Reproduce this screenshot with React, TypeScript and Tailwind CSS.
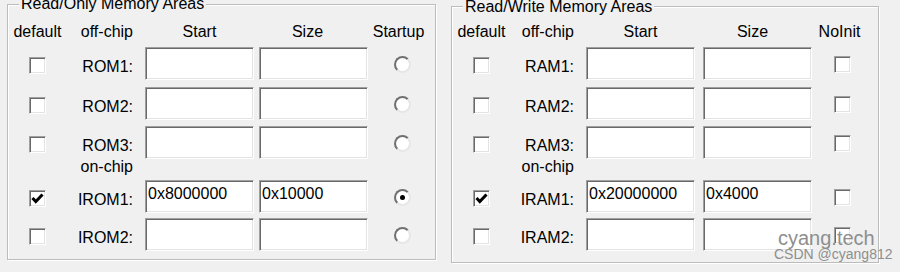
import React from 'react'

const sunken =
  'bg-white border border-t-[#a0a0a0] border-l-[#a0a0a0] border-r-white border-b-white shadow-[inset_1px_1px_0_#696969,inset_-1px_-1px_0_#e3e3e3]'

function Field({ value, className }: { value?: string; className: string }) {
  return (
    <div className={`h-[33px] w-[109px] shrink-0 pl-[2px] pt-[5px] leading-4 ${sunken} ${className}`}>
      {value}
    </div>
  )
}

function Check({ checked }: { checked?: boolean }) {
  return (
    <div className={`w-[17px] h-[17px] flex items-center justify-center ${sunken}`}>
      {checked && (
        <svg width="13" height="13" viewBox="0 0 13 13">
          <path d="M1.5 6 L4.8 9.5 L11.5 2.5" stroke="black" strokeWidth="3" fill="none" />
        </svg>
      )}
    </div>
  )
}

function Radio({ checked }: { checked?: boolean }) {
  return (
    <div className="w-[17px] h-[17px] rounded-full bg-white border-2 border-t-[#707070] border-l-[#707070] border-r-[#e6e6e6] border-b-[#e6e6e6] flex items-center justify-center">
      {checked && <div className="w-[5px] h-[5px] rounded-full bg-black" />}
    </div>
  )
}

interface Row {
  label: string
  checked?: boolean
  start?: string
  size?: string
  last?: boolean
}

interface Cols {
  col1: string
  col2: string
  startMl: string
  sizeMl: string
  col5: string
  sizeHead: string
  lastHead: string
  lastLabel: string
  radio: boolean
}

const romCols: Cols = {
  col1: 'w-[49px]',
  col2: 'w-[71px]',
  startMl: 'ml-[12px]',
  sizeMl: 'ml-[5px]',
  col5: 'w-[68px]',
  sizeHead: 'pr-[12px]',
  lastHead: 'pr-[7px]',
  lastLabel: 'Startup',
  radio: true,
}

const ramCols: Cols = {
  col1: 'w-[49px]',
  col2: 'w-[68px]',
  startMl: 'ml-[12px]',
  sizeMl: 'ml-[8px]',
  col5: 'w-[60px]',
  sizeHead: 'pr-[10px]',
  lastHead: 'pr-[5px]',
  lastLabel: 'NoInit',
  radio: false,
}

function AreaRow({ row, cols, className }: { row: Row; cols: Cols; className: string }) {
  return (
    <div className={`flex items-start h-[33px] pl-[5px] ${className}`}>
      <div className={`${cols.col1} shrink-0 flex justify-center pt-[10px]`}>
        <Check checked={row.checked} />
      </div>
      <div className={`${cols.col2} shrink-0 text-right pt-[12px] leading-4 whitespace-nowrap`}>{row.label}</div>
      <Field value={row.start} className={cols.startMl} />
      <Field value={row.size} className={cols.sizeMl} />
      <div className={`${cols.col5} shrink-0 flex justify-center pt-[9px]`}>
        {cols.radio ? <Radio checked={row.last} /> : <Check />}
      </div>
    </div>
  )
}

function Area({
  title,
  cols,
  off,
  on,
  boxClass,
  headClass,
  titleClass,
}: {
  title: string
  cols: Cols
  off: Row[]
  on: Row[]
  boxClass: string
  headClass: string
  titleClass: string
}) {
  return (
    <div className={`relative shrink-0 border border-[#bcbcbc] shadow-[inset_1px_1px_0_#fff,1px_1px_0_#fff] ${boxClass}`}>
      <span className={`absolute left-[11px] px-[2px] bg-[#f0f0f0] leading-4 whitespace-nowrap ${titleClass}`}>{title}</span>
      <div className={`flex items-start h-4 leading-4 pl-[5px] whitespace-nowrap ${headClass}`}>
        <div className={`${cols.col1} shrink-0 text-center`}>default</div>
        <div className={`${cols.col2} shrink-0 text-right`}>off-chip</div>
        <div className={`w-[109px] shrink-0 text-center ${cols.startMl}`}>Start</div>
        <div className={`w-[109px] shrink-0 text-center ${cols.sizeMl} ${cols.sizeHead}`}>Size</div>
        <div className={`${cols.col5} shrink-0 text-center ${cols.lastHead}`}>{cols.lastLabel}</div>
      </div>
      <AreaRow row={off[0]} cols={cols} className="mt-[7px]" />
      <AreaRow row={off[1]} cols={cols} className="mt-[7px]" />
      <AreaRow row={off[2]} cols={cols} className="mt-[6px]" />
      <div className="flex h-4 leading-4 pl-[5px]">
        <div className={`${cols.col1} shrink-0`} />
        <div className={`${cols.col2} shrink-0 text-right`}>on-chip</div>
      </div>
      <AreaRow row={on[0]} cols={cols} className="mt-[5px]" />
      <AreaRow row={on[1]} cols={cols} className="mt-[5px]" />
    </div>
  )
}

export default function App() {
  return (
    <div className="relative w-[900px] h-[272px] overflow-hidden bg-[#f0f0f0] text-[16px] text-black font-['Liberation_Sans',Arial,sans-serif]">
      <div className="flex items-start pl-[7px]">
        <Area
          title="Read/Only Memory Areas"
          cols={romCols}
          boxClass="mt-[4px] w-[429px] h-[256px]"
          headClass="mt-[19px]"
          titleClass="top-[-9px]"
          off={[{ label: 'ROM1:' }, { label: 'ROM2:' }, { label: 'ROM3:' }]}
          on={[
            { label: 'IROM1:', checked: true, start: '0x8000000', size: '0x10000', last: true },
            { label: 'IROM2:' },
          ]}
        />
        <Area
          title="Read/Write Memory Areas"
          cols={ramCols}
          boxClass="ml-[15px] mt-[6px] w-[428px] h-[257px]"
          headClass="mt-[17px]"
          titleClass="top-[-8px]"
          off={[{ label: 'RAM1:' }, { label: 'RAM2:' }, { label: 'RAM3:' }]}
          on={[
            { label: 'IRAM1:', checked: true, start: '0x20000000', size: '0x4000' },
            { label: 'IRAM2:' },
          ]}
        />
      </div>
      <div className="absolute left-[778px] top-[228px] text-[20px] leading-none text-[#8e8e8e] whitespace-nowrap">
        cyang.tech
      </div>
      <div className="absolute left-[774px] top-[247px] text-[14px] leading-none text-[#8e8e8e] whitespace-nowrap">
        CSDN @cyang812
      </div>
    </div>
  )
}
